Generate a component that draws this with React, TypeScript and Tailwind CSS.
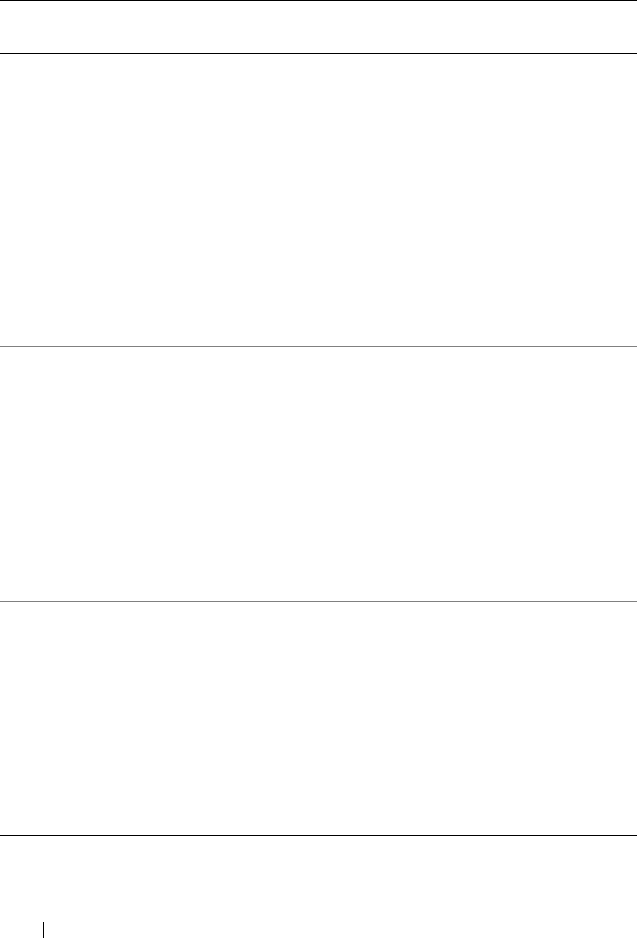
export default function App() {
  return (
    <div className="w-[641px] h-[938px] bg-white overflow-hidden">
      <div className="w-[637px]">
        <div className="h-[54px] border-t border-b border-black" />
        <div className="h-[293px] border-b border-[#808080]" />
        <div className="h-[255px] border-b border-[#808080]" />
        <div className="h-[234px] border-b border-black" />
      </div>
      <div className="h-[86px]" />
      <div className="pl-[43px]">
        <div className="w-px h-[16px] bg-black" />
      </div>
    </div>
  );
}
